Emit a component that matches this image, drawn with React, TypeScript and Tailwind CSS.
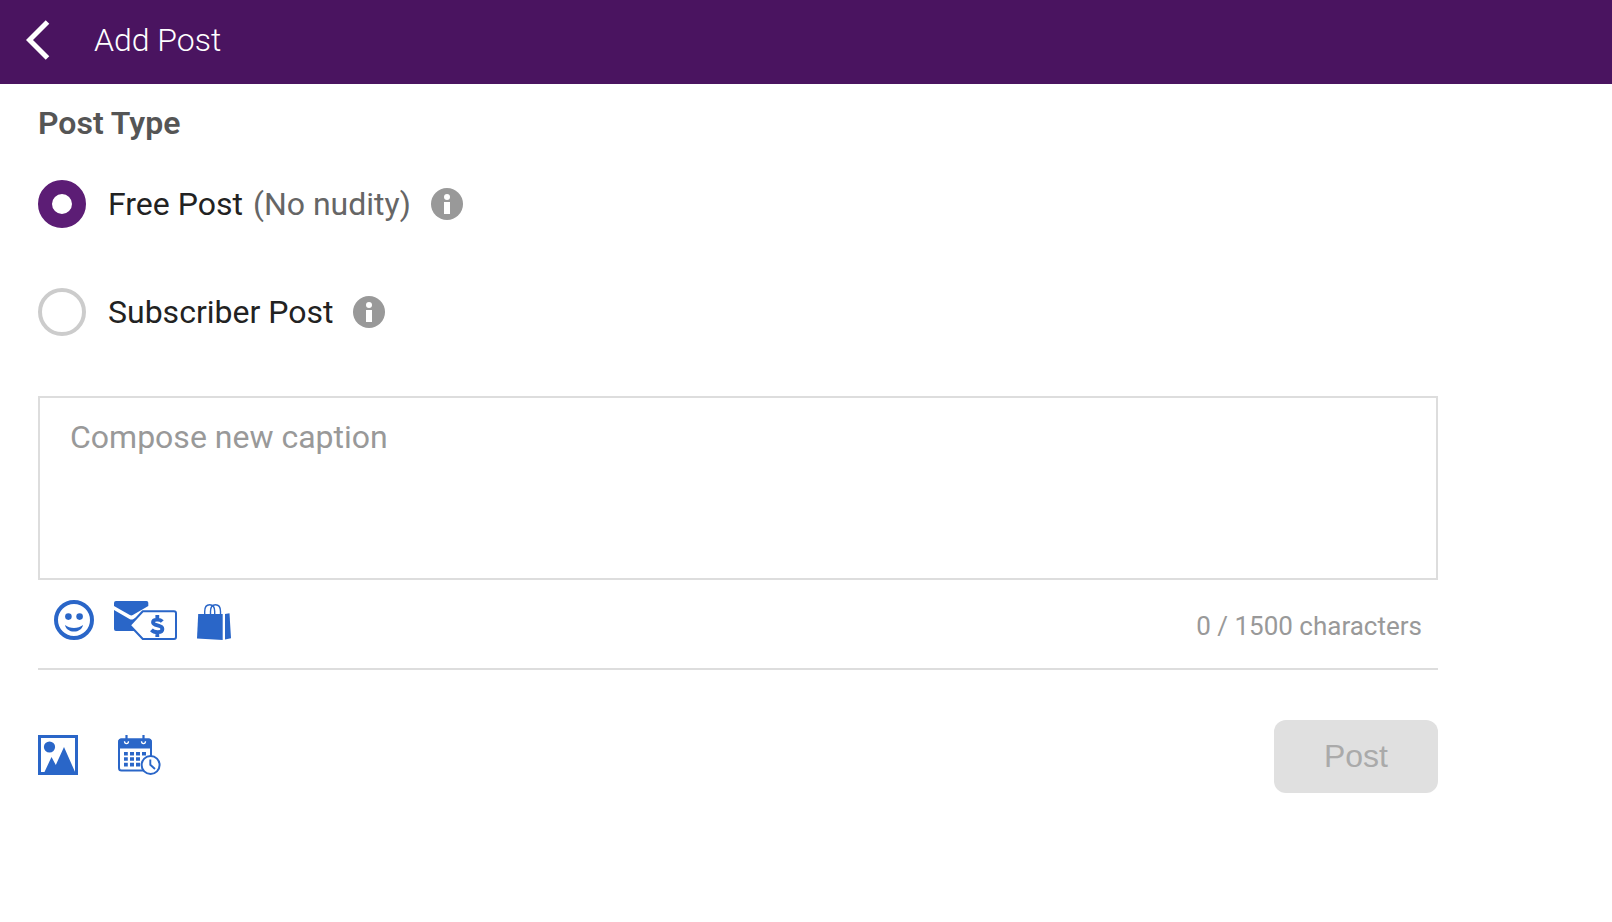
import React, { useState } from 'react';

const MAX_CHARS = 1500;

const POST_TYPES = [
  { id: 'free', label: 'Free Post', note: '(No nudity)' },
  { id: 'subscriber', label: 'Subscriber Post', note: '' },
];

const BackIcon = () => (
  <svg width="24" height="40" viewBox="0 0 24 40" fill="none" stroke="#fff" strokeWidth="5">
    <path d="M21.5 2 3.5 20l18 18" />
  </svg>
);

const InfoIcon = () => (
  <svg width="32" height="32" viewBox="0 0 32 32">
    <circle cx="16" cy="16" r="16" fill="#999" />
    <circle cx="16" cy="9" r="3" fill="#fff" />
    <path d="M13 14h6v12h-6z" fill="#fff" />
  </svg>
);

const SmileIcon = () => (
  <svg width="40" height="40" viewBox="0 0 40 40" fill="currentColor">
    <circle cx="20" cy="20" r="18" fill="none" stroke="currentColor" strokeWidth="4" />
    <circle cx="14.4" cy="16.6" r="3.3" />
    <circle cx="25.6" cy="16.6" r="3.3" />
    <path d="M11 25c5 4 13 4 18 0-.8 4.200-4.500 6.600-9 6.600s-8.200-2.400-9-6.600z" />
  </svg>
);

const MessageTagIcon = () => (
  <svg width="63" height="40" viewBox="0 0 63 40" fill="currentColor">
    <path d="M2 1h30.500q1.800 0 1.800 1.800V6L18.800 15q-1.500.8-3 0L0 6V3Q0 1 2 1z" />
    <path d="M0 10l15.500 9q2 1.200 4 0l7-4-10.500 10L21.500 31H2q-2 0-2-2z" />
    <path
      d="M28.800 11.200H60q2 0 2 2V37q0 2-2 2H28.800L15.800 25.300z"
      fill="#fff"
      stroke="currentColor"
      strokeWidth="2"
      strokeLinejoin="round"
    />
    <path
      d="M48.300 21.500c-2.200-2.600-9.300-2.700-9.300.8 0 4.200 9.400 2 9.400 6.600 0 4.300-8 4.200-11 1M43.300 15v5m0 11.500V37"
      fill="none"
      stroke="currentColor"
      strokeWidth="3.800"
    />
  </svg>
);

const BagIcon = () => (
  <svg width="34" height="40" viewBox="0 0 34 40" fill="currentColor">
    <path d="M1.200 14h24.500v26L0 38.500z" />
    <path d="M28 14l4.500-.8L34 38.300l-6 1.200z" />
    <g fill="none" stroke="currentColor" strokeWidth="1.400">
      <path d="M7.700 15v-3.500c0-4.500 1.700-6.700 5-6.700s5 2.200 5 6.700V15" />
      <path d="M13.500 15v-3.500c0-4.500 1.700-6.700 5-6.700s5 2.200 5 6.700V15" />
    </g>
  </svg>
);

const ImageIcon = () => (
  <svg width="40" height="40" viewBox="0 0 40 40" fill="currentColor">
    <path d="M1.500 1.500h37v37h-37z" fill="none" stroke="currentColor" strokeWidth="3" />
    <circle cx="11.500" cy="12" r="5.600" />
    <path d="M6 38l7.500-16 4.300 8L26 12l11.500 26z" />
  </svg>
);

const ScheduleIcon = () => (
  <svg width="43" height="40" viewBox="0 0 43 40" fill="none" stroke="currentColor">
    <rect x="1" y="4.500" width="32" height="31" rx="2.500" strokeWidth="2" />
    <path d="M1 5.500q0-1.500 2-1.500h28q2 0 2 1.500V13H1z" fill="currentColor" strokeWidth="1" />
    <path d="M8.500 0v7M25.500 0v7" strokeWidth="2.200" />
    <path d="M6.500 6.200c0 3.200 4 3.200 4 0M23.500 6.200c0 3.200 4 3.200 4 0" stroke="#fff" strokeWidth="1.300" />
    <path d="M6 18.700h3.800m2.200 0h4m2 0h4m2 0h4M6 24h3.800m2.200 0h4m2 0h4M6 29.600h3.800m2.200 0h4m2 0h4" strokeWidth="3.600" />
    <circle cx="32.600" cy="30" r="9" fill="#fff" strokeWidth="2" />
    <path d="M32.300 24.500v5.300l4.700 4.200" strokeWidth="1.900" />
  </svg>
);

interface ToolButtonProps {
  label: string;
  children: React.ReactNode;
}

const ToolButton: React.FC<ToolButtonProps> = ({ label, children }) => (
  <button type="button" aria-label={label} className="cursor-pointer text-[#2a66c8]">
    {children}
  </button>
);

export default function App() {
  const [postType, setPostType] = useState('free');
  const [caption, setCaption] = useState('');

  return (
    <div className="min-h-screen bg-white font-['Roboto',sans-serif] text-[32px] leading-10">
      <header className="flex h-[84px] items-center gap-11 bg-[#4a1460] px-[26px] pb-1 text-white">
        <button type="button" aria-label="Back" className="cursor-pointer">
          <BackIcon />
        </button>
        <h1 className="font-light">Add Post</h1>
      </header>

      <main className="px-[38px] pt-[19px]">
        <form className="max-w-[1400px]" onSubmit={(e) => e.preventDefault()}>
          <fieldset>
            <legend className="font-semibold text-[#555]">Post Type</legend>
            <div className="flex flex-col gap-[60px] pt-[37px]">
              {POST_TYPES.map((t) => (
                <div key={t.id} className="flex items-center gap-5">
                  <label className="flex cursor-pointer items-center text-[#222]">
                    <input
                      type="radio"
                      name="postType"
                      value={t.id}
                      checked={postType === t.id}
                      onChange={() => setPostType(t.id)}
                      className="mr-[22px] size-12 appearance-none rounded-full border-4 border-[#ccc] bg-white checked:border-[14px] checked:border-[#5c1d75]"
                    />
                    {t.label}
                    {t.note && <span className="ml-[10px] text-[#666]">{t.note}</span>}
                  </label>
                  <button type="button" aria-label={`About ${t.label}`} className="cursor-pointer">
                    <InfoIcon />
                  </button>
                </div>
              ))}
            </div>
          </fieldset>

          <textarea
            aria-label="Caption"
            placeholder="Compose new caption"
            maxLength={MAX_CHARS}
            value={caption}
            onChange={(e) => setCaption(e.target.value)}
            className="mt-[60px] block h-[184px] w-full resize-none border-2 border-[#ddd] px-[30px] py-[19px] text-[#222] outline-none placeholder:text-[#999]"
          />

          {/* Caption toolbar */}
          <div className="flex items-center justify-between border-b-2 border-[#ddd] px-4 pt-5 pb-7">
            <div className="flex items-center gap-5">
              <ToolButton label="Add emoji">
                <SmileIcon />
              </ToolButton>
              <ToolButton label="Promote paid message">
                <MessageTagIcon />
              </ToolButton>
              <ToolButton label="Promote store item">
                <BagIcon />
              </ToolButton>
            </div>
            <span className="pt-3 text-[26px] leading-7 text-[#999]">
              {caption.length} / {MAX_CHARS} characters
            </span>
          </div>

          <div className="flex items-center justify-between pt-[50px]">
            <div className="flex items-center gap-10 pb-1">
              <ToolButton label="Add media">
                <ImageIcon />
              </ToolButton>
              <ToolButton label="Schedule post">
                <ScheduleIcon />
              </ToolButton>
            </div>
            <button
              type="submit"
              disabled={caption.length === 0}
              className="rounded-xl bg-[#2a66c8] px-[50px] pt-4 pb-[17px] font-['Liberation_Sans',sans-serif] text-white disabled:bg-[#e0e0e0] disabled:text-[#aaa]"
            >
              Post
            </button>
          </div>
        </form>
      </main>
    </div>
  );
}
